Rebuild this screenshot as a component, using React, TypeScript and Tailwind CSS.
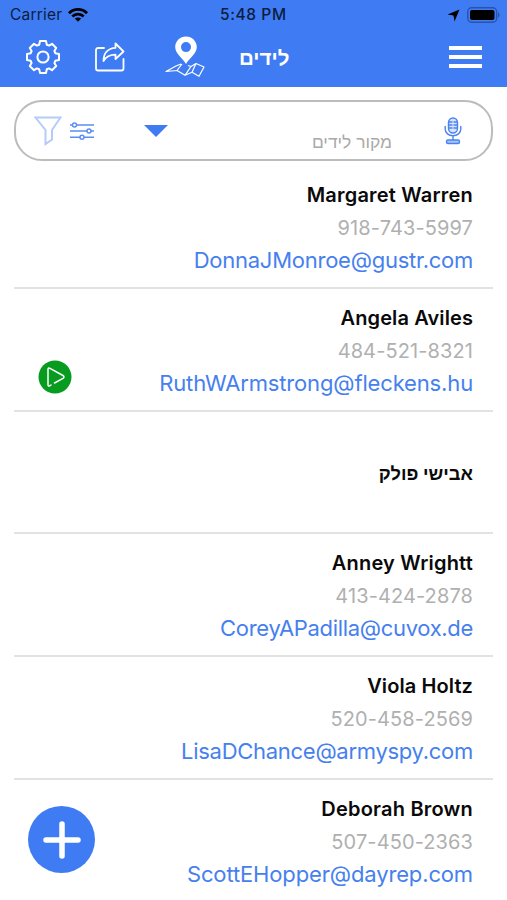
import React from "react";

type Lead = {
  name: string;
  nameClass: string;
  phone?: string;
  email?: string;
  emailClass?: string;
  playing?: boolean;
};

const leads: Lead[] = [
  {
    name: "Margaret Warren",
    nameClass: "text-[20px] tracking-[0.2px]",
    phone: "918-743-5997",
    email: "DonnaJMonroe@gustr.com",
    emailClass: "tracking-[-0.25px]",
  },
  {
    name: "Angela Aviles",
    nameClass: "text-[20px] tracking-[0.1px]",
    phone: "484-521-8321",
    email: "RuthWArmstrong@fleckens.hu",
    emailClass: "tracking-[-0.15px]",
    playing: true,
  },
  { name: "אבישי פולק", nameClass: "text-[18.3px]" },
  {
    name: "Anney Wrightt",
    nameClass: "text-[20px] tracking-[0.2px]",
    phone: "413-424-2878",
    email: "CoreyAPadilla@cuvox.de",
    emailClass: "tracking-[-0.32px]",
  },
  {
    name: "Viola Holtz",
    nameClass: "text-[20px] tracking-[0.1px]",
    phone: "520-458-2569",
    email: "LisaDChance@armyspy.com",
    emailClass: "tracking-[-0.28px]",
  },
  {
    name: "Deborah Brown",
    nameClass: "text-[20px] tracking-[0.2px]",
    phone: "507-450-2363",
    email: "ScottEHopper@dayrep.com",
    emailClass: "tracking-[-0.14px]",
  },
];

const GearIcon = () => (
  <svg className="h-[34px] w-[34px]" viewBox="0 0 34 34" fill="none" stroke="white" strokeWidth="2" strokeLinejoin="round">
    <path d="M13.200 4.700 14 1h6l.8 3.700 2.200.9 3-1.800L30.200 8l-1.800 3 .9 2.200 3.700.8v6l-3.700.8-.9 2.200 1.800 3-4.200 4.200-3-1.800-2.200.9L20 33h-6l-.8-3.700-2.200-.9-3 1.800L3.800 26l1.800-3-.9-2.200L1 20v-6l3.700-.8.9-2.200-1.800-3L8 3.800l3 1.800z" />
    <circle cx="17" cy="17" r="5.600" />
  </svg>
);

const ShareIcon = () => (
  <svg className="h-[30px] w-[30px]" viewBox="0 0 30 30" fill="none" stroke="white" strokeWidth="1.8" strokeLinejoin="round" strokeLinecap="round">
    <path d="M9 6H3a2 2 0 0 0-2 2v18.500a2 2 0 0 0 2 2h23.500a2 2 0 0 0 2-2V17" />
    <path d="M20.500 1.500 28.500 9.500l-8 7.500v-4.300c-6 0-9.500 2-12 6.300C8.500 11 13 6.200 20.500 5.800z" />
  </svg>
);

const MapIcon = () => (
  <svg className="h-[42px] w-[40px]" viewBox="0 0 40 42">
    <path fill="white" fillRule="evenodd" d="M21 0.500c6 0 10.800 4.700 10.800 10.600C31.800 17.500 25 21.500 21 28c-4-6.500-10.800-10.500-10.800-16.900C10.200 5.200 15 .5 21 .5zm0 5.600a5 5 0 1 0 0 10 5 5 0 0 0 0-10z" />
    <path fill="none" stroke="white" strokeWidth="1.200" strokeLinejoin="round" d="M16 28 11 30 1 35.500l11-1 8 4.800 7-3 7 4 5-9.300L31 27.500l-5 3-3-1M12 34.500 17 28M20 39.300l6-8.800M27 36.300l4-8.800" />
  </svg>
);

const MicIcon = () => (
  <svg className="h-[28px] w-[18px]" viewBox="0 0 18 28" fill="none" stroke="#4a82f0" strokeWidth="1.400" strokeLinecap="round">
    <rect x="4.500" y="1" width="9" height="15" rx="4.500" fill="#d8e4fc" />
    <path d="M5 5h3M5 8h3M5 11h3M10 5h3M10 8h3M10 11h3M1.200 9.500V12c0 4 3.500 6.800 7.800 6.800s7.800-2.800 7.800-6.800V9.500M9 19v4" />
    <rect x="2.500" y="23" width="13" height="3.500" rx="1.500" fill="#a9c5fb" />
  </svg>
);

const StatusBar = () => (
  <div className="flex h-7 items-center pt-0.5 text-[15.500px] text-[#0a1c40]">
    <div className="flex w-[220px] items-center gap-[6px] pl-[10px]">
      <span className="tracking-[0.2px]">Carrier</span>
      <svg className="h-[14px] w-[20px]" viewBox="0 0 20 14" fill="none" stroke="black" strokeWidth="2.800">
        <path d="M1 5.200c5-5 13-5 18 0M4.300 8.500c3.200-3.200 8.200-3.200 11.400 0" />
        <path fill="black" stroke="none" d="M10 13.800 6.800 10.600c1.800-1.500 4.600-1.500 6.400 0z" />
      </svg>
    </div>
    <span className="w-[227px] font-medium tracking-[0.6px]">5:48 PM</span>
    <svg className="h-[13px] w-[13px]" viewBox="0 0 13 13">
      <path d="M12.500.5 7.500 12.500 6.500 6.500.5 5.500z" />
    </svg>
    <svg className="ml-[7px] h-4 w-[33px]" viewBox="0 0 33 16">
      <rect x=".7" y=".7" width="29" height="14.600" rx="4" fill="none" stroke="#2854a8" strokeWidth="1.400" />
      <rect x="3" y="3" width="24.500" height="10" rx="2" />
      <path fill="#2854a8" d="M31 5.500c2 .6 2 4.400 0 5z" />
    </svg>
  </div>
);

const Header = () => (
  <header className="h-[87px] shrink-0 bg-[#3f7cf4]">
    <StatusBar />
    {/* NAV */}
    <div className="flex h-[58px] items-center pr-[25px] pl-[26px]">
      <GearIcon />
      <div className="ml-[35px]">
        <ShareIcon />
      </div>
      <div className="ml-[40px]">
        <MapIcon />
      </div>
      <h1 dir="rtl" className="ml-[34px] pt-[3px] text-[20.500px] font-bold text-white">
        לידים
      </h1>
      <div className="ml-auto flex w-[33px] flex-col gap-[5px]">
        <span className="h-1 bg-white" />
        <span className="h-1 bg-white" />
        <span className="h-1 bg-white" />
      </div>
    </div>
  </header>
);

const SearchBar = () => (
  <div className="mx-[14px] mt-[13px] flex h-[61px] shrink-0 items-center rounded-[28px] border-2 border-[#bcbcbc] pr-[29px] pl-[18px]">
    <svg className="h-[30px] w-[28px]" viewBox="0 0 28 30" fill="none" stroke="#b5cbfa" strokeWidth="2">
      <path d="M1.500 1.500h25L18 14v9.500l-6.500 4.500V14z" />
    </svg>
    <svg className="ml-[7px] h-[18px] w-[26px]" viewBox="0 0 26 18" fill="white" stroke="#5b8ef3" strokeWidth="1.500">
      <path d="M1 3h24M1 9h24M1 15.200h24" />
      <circle cx="5.500" cy="3" r="2" />
      <circle cx="20" cy="9" r="2" />
      <circle cx="13" cy="15.200" r="2" />
    </svg>
    <svg className="ml-[49px] h-3 w-6" viewBox="0 0 24 12">
      <path fill="#3f7cf4" d="M0 0h24L12 12z" />
    </svg>
    <span dir="rtl" className="mt-[23px] mr-[52px] ml-auto text-[17.400px] text-[#a9a9a9]">
      מקור לידים
    </span>
    <MicIcon />
  </div>
);

const LeadRow = ({ lead }: { lead: Lead }) => (
  <li className="mx-[14px] flex h-[122.700px] shrink-0 items-center justify-between border-b-2 border-[#e2e2e2] pt-0.5 pr-5 pl-6">
    <div className="pt-[54px]">
      {lead.playing && (
        <svg className="h-[34px] w-[34px]" viewBox="0 0 34 34">
          <circle cx="17" cy="17" r="16.500" fill="#079c20" />
          <path fill="none" stroke="white" strokeWidth="1.500" strokeLinecap="round" strokeLinejoin="round" d="M13 25 12 25.700c-1.500.9-2 .3-2-1.200v-15C10 8 10.500 7.500 12 8.300l13 7.200c1.300.8 1.300 2 0 2.800L16.500 23" />
        </svg>
      )}
    </div>
    <div className="flex flex-col items-end whitespace-nowrap">
      <span className={`leading-[33px] font-semibold text-[#0a0a0a] ${lead.nameClass}`}>{lead.name}</span>
      {lead.phone && <span className="text-[20px] leading-[33px] tracking-[0.1px] text-[#b0b0b0]">{lead.phone}</span>}
      {lead.email && <span className={`text-[22px] leading-[31px] text-[#4680ef] ${lead.emailClass}`}>{lead.email}</span>}
    </div>
  </li>
);

const App = () => {
  return (
    <div className="relative flex h-[900px] w-[507px] flex-col overflow-hidden bg-white font-['Inter','Liberation_Sans',sans-serif]">
      <Header />
      <SearchBar />
      {/* LEADS */}
      <ul className="mt-[5.400px] flex flex-col">
        {leads.map((lead) => (
          <LeadRow key={lead.name} lead={lead} />
        ))}
      </ul>
      {/* ADD BUTTON */}
      <button className="absolute bottom-[27px] left-7 flex size-[67px] items-center justify-center rounded-full bg-[#3f7cf4]">
        <svg className="size-[38px]" viewBox="0 0 38 38" stroke="white" strokeWidth="5.500" strokeLinecap="round">
          <path d="M19 3v32M3 19h32" />
        </svg>
      </button>
    </div>
  );
};

export default App;
